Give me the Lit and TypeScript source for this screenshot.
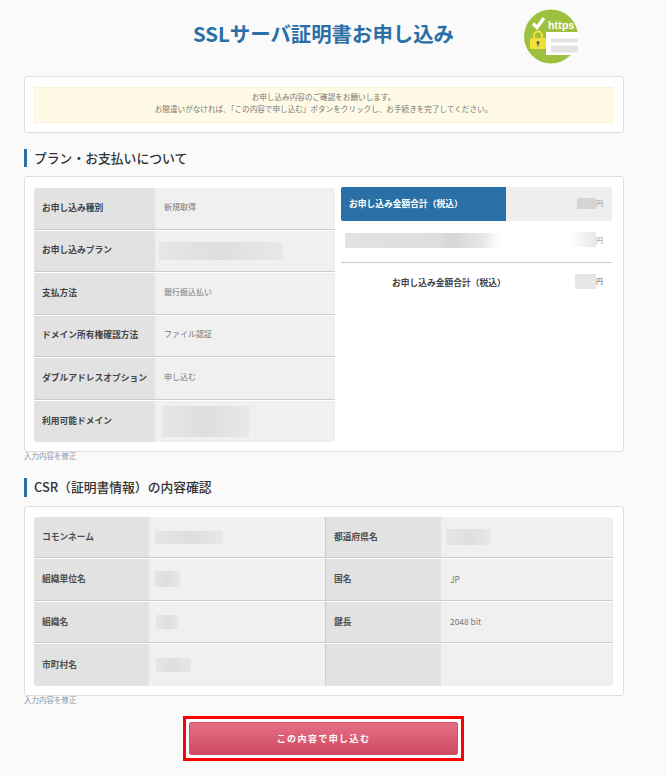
import { LitElement, html, css } from "lit";
import { customElement } from "lit/decorators.js";

type Cell = { label: string; value?: string; redact?: string };

@customElement("app-root")
export class AppRoot extends LitElement {
  static styles = css`
    :host {
      display: block;
      min-height: 776px;
      background: #fafafa;
      font-family: "Noto Sans CJK JP", "Noto Sans", sans-serif;
      color: #444;
      font-size: 8.75px;
      overflow: hidden;
    }
    .page { width: 600px; margin-left: 24px; display: flex; flex-direction: column; }
    .header { height: 76px; position: relative; display: flex; justify-content: center; }
    h1 { margin: 20px 0 0; width: 262px; font-size: 20.4px; line-height: 27px; font-weight: 700; color: #2a6fa5; white-space: nowrap; }
    .logo { position: absolute; left: 500px; top: 9px; width: 54px; height: 55px; }
    .card { background: #fff; border: 1px solid #ddd; border-radius: 3px; box-sizing: border-box; }
    .notice-card { height: 57px; padding: 10px 10px 9px 9px; }
    .notice { height: 36px; box-sizing: border-box; background: #fffae6; border: 1px solid #f7f2dc; color: #777; text-align: center; font-size: 7.6px; line-height: 12px; padding: 3px 0 0; }
    h2 { margin: 0; border-left: 3px solid #2a6fa5; padding-left: 7px; font-size: 12.8px; font-weight: 500; color: #333; line-height: 18px; white-space: nowrap; }
    .h-plan { margin-top: 16px; height: 18px; }
    .h-csr { margin-top: 17px; height: 19px; line-height: 18px; }
    .plan-card { margin-top: 9px; height: 276px; padding: 10px 11px 9px 9px; display: flex; gap: 6px; }
    .plan-table { width: 301px; margin-top: 1px; border-radius: 3px; overflow: hidden; display: flex; flex-direction: column; }
    .row { flex: 1; display: flex; flex-direction: column; }
    .row-inner { flex: 1; display: flex; border-bottom: 1px solid #ccc; }
    .row:not(:last-child) { border-bottom: 1px solid #fff; }
    .row:last-child .row-inner { border-bottom: 0; }
    .label { width: 121px; flex: none; box-sizing: border-box; background: #e2e2e2; padding: 0 0 2px 8px; display: flex; align-items: center; font-weight: 700; color: #444; white-space: nowrap; }
    .value { flex: 1; background: #f0f0f0; display: flex; align-items: center; padding-left: 9px; font-size: 8px; color: #777; white-space: nowrap; }
    .value-text { margin-bottom: 4px; }
    .redact { background: linear-gradient(90deg, #e6e6e6, #dedede 50%, #e8e8e8); filter: blur(0.6px); }
    .summary { width: 271px; display: flex; flex-direction: column; }
    .sum-head { height: 34px; background: #eee; border-radius: 2px; display: flex; align-items: center; overflow: hidden; }
    .sum-title { width: 165px; align-self: stretch; display: flex; align-items: center; box-sizing: border-box; padding: 0 0 2px 8px; background: #2a6fa5; color: #fff; font-weight: 700; white-space: nowrap; }
    .price { margin: 0 9px 2px auto; display: flex; align-items: center; color: #8a97a5; font-size: 7px; }
    .sum-item { height: 42px; box-sizing: border-box; display: flex; align-items: center; border-bottom: 1px solid #ccc; padding: 0 0 2px 4px; }
    .sum-total { height: 40px; box-sizing: border-box; display: flex; align-items: center; font-weight: 700; color: #444; padding: 0 0 2px 51px; white-space: nowrap; }
    .fade-l { width: 155px; height: 15px; background: linear-gradient(90deg, #e2e2e2, #dedede 60%, #d5d5d5 68%, #e6e6e6 88%, #fff); }
    .fade-r { width: 26px; height: 15px; background: linear-gradient(90deg, #fff, #e8e8e8); }
    .ph-head { width: 19px; height: 11px; background: #d5d5d5; }
    .ph-total { width: 21px; height: 15px; background: #e6e6e6; }
    .link { font-size: 7.5px; line-height: 10px; height: 10px; color: #8494a8; margin-top: -1px; white-space: nowrap; }
    .csr-card { margin-top: 9px; height: 190px; padding: 10px 10px 9px 9px; }
    .csr-table { display: grid; grid-template-columns: 292px 288px; grid-template-rows: repeat(4, 1fr); height: 169px; border-radius: 3px; overflow: hidden; }
    .cell { display: flex; flex-direction: column; }
    .cell:nth-child(odd) { border-right: 1px solid #ccc; }
    .cell:not(:nth-last-child(-n + 2)) { border-bottom: 1px solid #fff; }
    .cell:not(:nth-last-child(-n + 2)) .row-inner { border-bottom: 1px solid #ccc; }
    .cell:nth-last-child(-n + 2) .row-inner { border-bottom: 0; }
    .cell .label { width: 115px; color: #505050; padding-bottom: 1px; }
    .cell .value { font-size: 8.4px; }
    .cell .value-text { margin-bottom: 1px; }
    .actions { display: flex; justify-content: center; margin-top: 11px; margin-left: -1px; }
    .outline { border: 3px solid #f00; padding: 3px; background: #fff; display: flex; }
    button { width: 269px; height: 33px; border: 1px solid #cf5068; border-radius: 2px; background: linear-gradient(#e56f84, #cf4a64); color: #fff; font-family: inherit; font-size: 9px; font-weight: 700; letter-spacing: 1.4px; padding: 0; }
  `;

  private plan: Cell[] = [
    { label: "お申し込み種別", value: "新規取得" },
    { label: "お申し込みプラン", redact: "w124" },
    { label: "支払方法", value: "銀行振込払い" },
    { label: "ドメイン所有権確認方法", value: "ファイル認証" },
    { label: "ダブルアドレスオプション", value: "申し込む" },
    { label: "利用可能ドメイン", redact: "w87" },
  ];

  private redact(w: number, h: number, dx = 0) {
    return html`<div class="redact" style="width:${w}px;height:${h}px;margin-left:${dx}px"></div>`;
  }

  private logo() {
    return html`<svg class="logo" viewBox="0 0 54 55" aria-label="https">
      <circle cx="27" cy="27.5" r="27" fill="#9dc13f" />
      <path d="M9 14.5l4 4 7-9.5" fill="none" stroke="#fff" stroke-width="3.2" />
      <text x="24" y="20" font-family="'Liberation Sans', sans-serif" font-size="10.5" font-weight="700" fill="#fff" letter-spacing=".2">https</text>
      <rect x="22" y="23" width="32" height="23" fill="#fff" />
      <rect x="27" y="29.5" width="27" height="4" fill="#e4e4e4" />
      <rect x="27" y="36.5" width="27" height="7" fill="#e4e4e4" />
      <path d="M10 29v-2.5a4 4 0 0 1 8 0V29" fill="none" stroke="#f2e23c" stroke-width="2" />
      <rect x="6" y="29" width="16" height="11" rx="1.5" fill="#efe03a" />
      <circle cx="14" cy="33.5" r="1.5" fill="#555" />
      <rect x="13.4" y="34" width="1.2" height="3.2" fill="#555" />
    </svg>`;
  }

  private csrCell(label: string, body: unknown) {
    return html`<div class="cell"><div class="row-inner"><div class="label">${label}</div><div class="value">${body}</div></div></div>`;
  }

  render() {
    return html`<div class="page">
      <header class="header">
        <h1>SSLサーバ証明書お申し込み</h1>
        ${this.logo()}
      </header>

      <section class="card notice-card">
        <div class="notice">
          お申し込み内容のご確認をお願いします。<br />
          お間違いがなければ、「この内容で申し込む」ボタンをクリックし、お手続きを完了してください。
        </div>
      </section>

      <h2 class="h-plan">プラン・お支払いについて</h2>
      <section class="card plan-card">
        <div class="plan-table">
          ${this.plan.map(
            (r) => html`<div class="row"><div class="row-inner">
              <div class="label">${r.label}</div>
              <div class="value">
                ${r.value ? html`<span class="value-text">${r.value}</span>` : ""}
                ${r.redact === "w124" ? this.redact(124, 18, -5) : ""}
                ${r.redact === "w87" ? this.redact(87, 31, -2) : ""}
              </div>
            </div></div>`
          )}
        </div>
        <div class="summary">
          <div class="sum-head">
            <div class="sum-title">お申し込み金額合計（税込）</div>
            <div class="price"><div class="ph-head"></div>円</div>
          </div>
          <div class="sum-item">
            <div class="fade-l"></div>
            <div class="price"><div class="fade-r"></div>円</div>
          </div>
          <div class="sum-total">
            お申し込み金額合計（税込）
            <div class="price"><div class="ph-total"></div>円</div>
          </div>
        </div>
      </section>
      <a class="link">入力内容を修正</a>

      <h2 class="h-csr">CSR（証明書情報）の内容確認</h2>
      <section class="card csr-card">
        <div class="csr-table">
          ${this.csrCell("コモンネーム", this.redact(68, 13, -3))}
          ${this.csrCell("都道府県名", this.redact(45, 16, -4))}
          ${this.csrCell("組織単位名", this.redact(26, 16, -4))}
          ${this.csrCell("国名", html`<span class="value-text">JP</span>`)}
          ${this.csrCell("組織名", this.redact(22, 14, -2))}
          ${this.csrCell("鍵長", html`<span class="value-text">2048 bit</span>`)}
          ${this.csrCell("市町村名", this.redact(35, 14, -2))}
          ${this.csrCell("", "")}
        </div>
      </section>
      <a class="link">入力内容を修正</a>

      <div class="actions">
        <div class="outline"><button>この内容で申し込む</button></div>
      </div>
    </div>`;
  }
}
